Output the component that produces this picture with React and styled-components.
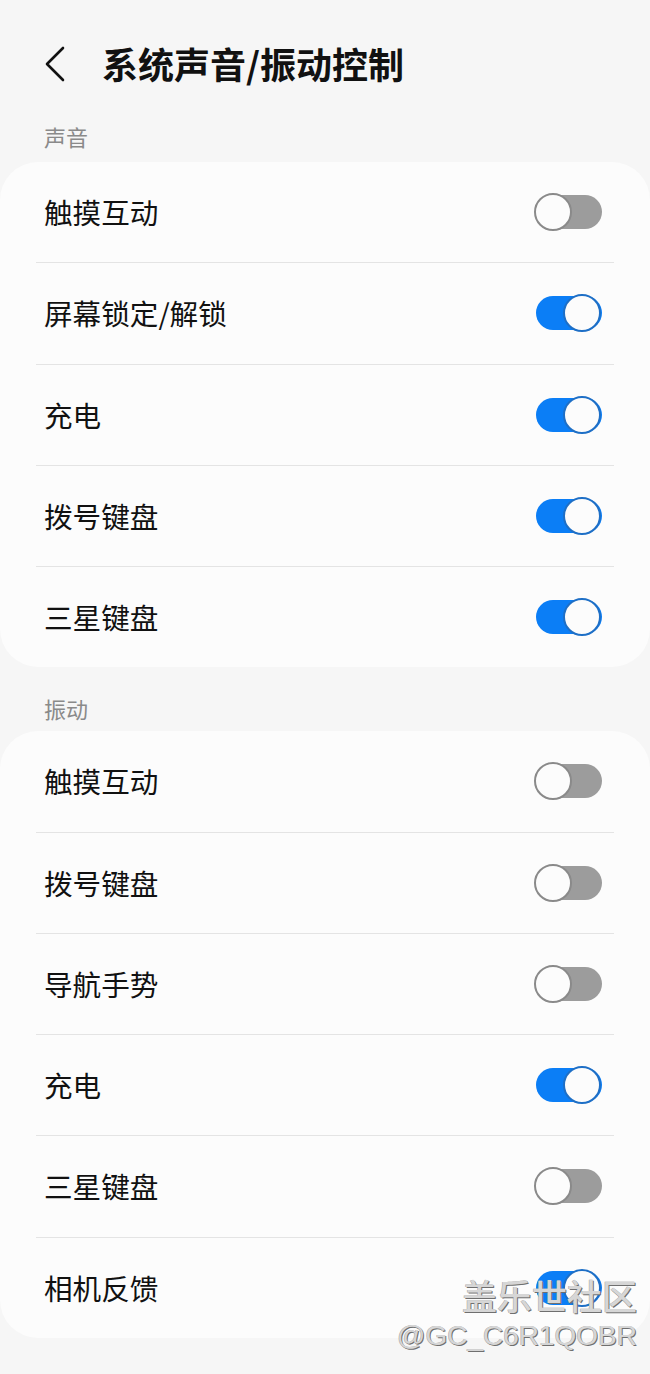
import React from "react";
import styled, { createGlobalStyle } from "styled-components";

const Global = createGlobalStyle`
  html, body { margin: 0; padding: 0; background: #f6f6f6; }
  body { font-family: "Noto Sans CJK SC", "Noto Sans", sans-serif; }
`;

const Page = styled.div`
  position: relative;
  width: 650px;
  min-height: 1374px;
  background: #f6f6f6;
  overflow: hidden;
`;

const Header = styled.header`
  height: 126px;
  display: flex;
  align-items: center;
  padding-left: 44px;
  gap: 34px;
`;

const BackIcon = styled.svg`
  width: 24px;
  height: 36px;
  flex: none;
  margin-top: 1px;
`;

const Title = styled.h1`
  margin: 0;
  font-size: 36px;
  line-height: 40px;
  font-weight: 700;
  color: #111;
  letter-spacing: 0;
`;

const SectionLabel = styled.div`
  padding-left: 44px;
  margin-top: ${(p) => p.$top || 0}px;
  margin-bottom: ${(p) => p.$bottom || 16}px;
  height: 20px;
  line-height: 20px;
  font-size: 22px;
  color: #8a8a8a;
`;

const Card = styled.section`
  background: #fcfcfc;
  border-radius: 38px;
  display: flex;
  flex-direction: column;
`;

const Row = styled.div`
  height: 100.25px;
  display: flex;
  align-items: center;
  justify-content: space-between;
  padding: 0 48px 0 44px;
`;

const RowText = styled.span`
  font-size: 28.6px;
  color: #111;
  line-height: 36px;
`;

const Divider = styled.div`
  height: 1px;
  margin: 0 36px;
  background: #e4e4e4;
`;

const Switch = styled.div`
  position: relative;
  width: 68px;
  height: 40px;
  flex: none;
`;

const Track = styled.div`
  position: absolute;
  left: 2px;
  right: 0;
  top: 3px;
  height: 34px;
  border-radius: 17px;
  background: ${(p) => (p.$on ? "#0b7ef6" : "#9c9c9c")};
`;

const Knob = styled.div`
  position: absolute;
  top: 1px;
  left: ${(p) => (p.$on ? "29px" : "0")};
  width: 38px;
  height: 38px;
  box-sizing: border-box;
  border-radius: 50%;
  background: #fcfcfc;
  border: 2px solid ${(p) => (p.$on ? "#1e6fc6" : "#8a8a8a")};
`;

const Watermark = styled.div`
  position: absolute;
  right: 13px;
  bottom: 19px;
  display: flex;
  flex-direction: column;
  align-items: flex-end;
  color: #d6d6d6;
  text-shadow: 1px 1px 0 #6f6f6f, -0.5px -0.5px 0 #a8a8a8;
  pointer-events: none;
`;

const WmTitle = styled.div`
  font-family: "Noto Sans CJK SC", sans-serif;
  font-size: 35px;
  line-height: 44px;
  font-weight: 500;
`;

const WmId = styled.div`
  font-family: "Liberation Sans", Arial, sans-serif;
  font-size: 28px;
  line-height: 38px;
`;

function Toggle({ on }) {
  return (
    <Switch>
      <Track $on={on} />
      <Knob $on={on} />
    </Switch>
  );
}

function Group({ items }) {
  return (
    <Card>
      {items.map(([label, on], i) => (
        <React.Fragment key={i}>
          {i > 0 && <Divider />}
          <Row>
            <RowText>{label}</RowText>
            <Toggle on={on} />
          </Row>
        </React.Fragment>
      ))}
    </Card>
  );
}

const sound = [
  ["触摸互动", false],
  ["屏幕锁定/解锁", true],
  ["充电", true],
  ["拨号键盘", true],
  ["三星键盘", true],
];

const vibration = [
  ["触摸互动", false],
  ["拨号键盘", false],
  ["导航手势", false],
  ["充电", true],
  ["三星键盘", false],
  ["相机反馈", true],
];

export default function App() {
  return (
    <Page>
      <Global />
      <Header>
        <BackIcon viewBox="0 0 24 36">
          <polyline
            points="19,2 3,18 19,34"
            fill="none"
            stroke="#111"
            strokeWidth="2.6"
            strokeLinecap="round"
            strokeLinejoin="round"
          />
        </BackIcon>
        <Title>系统声音/振动控制</Title>
      </Header>
      <SectionLabel>声音</SectionLabel>
      <Group items={sound} />
      <SectionLabel $top={31} $bottom={13}>振动</SectionLabel>
      <Group items={vibration} />
      <Watermark>
        <WmTitle>盖乐世社区</WmTitle>
        <WmId>@GC_C6R1QOBR</WmId>
      </Watermark>
    </Page>
  );
}
